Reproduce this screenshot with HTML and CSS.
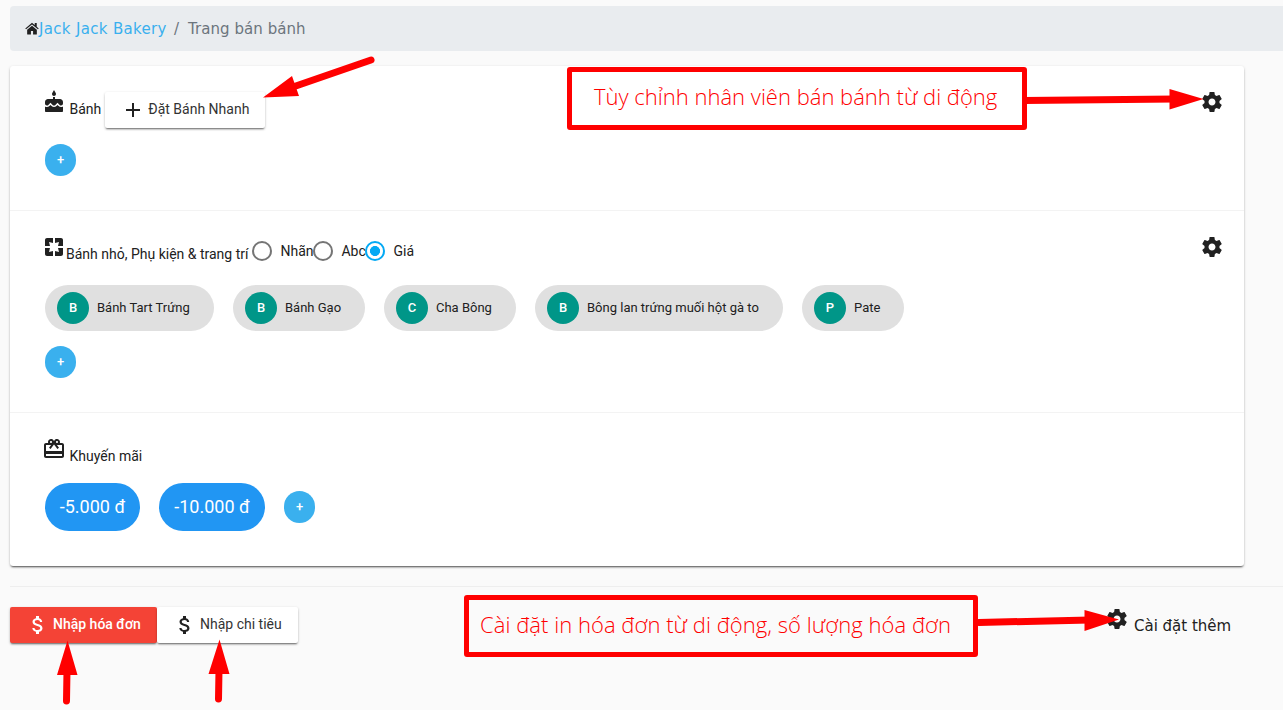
FILE: index.html
```html
<!DOCTYPE html>
<html lang="vi">
<head>
<meta charset="utf-8">
<title>Jack Jack Bakery</title>
<link rel="stylesheet" href="styles.css">
</head>
<body>
<svg class="defs" width="0" height="0">
  <symbol id="gear" viewBox="0 0 24 24"><path d="M19.43 12.98c.04-.32.07-.64.07-.98s-.03-.66-.07-.98l2.11-1.65c.19-.15.24-.42.12-.64l-2-3.46c-.12-.22-.39-.3-.61-.22l-2.49 1c-.52-.4-1.08-.73-1.69-.98l-.38-2.65C14.46 2.18 14.25 2 14 2h-4c-.25 0-.46.18-.49.42l-.38 2.65c-.61.25-1.17.59-1.69.98l-2.49-1c-.23-.09-.49 0-.61.22l-2 3.46c-.13.22-.07.49.12.64l2.11 1.65c-.04.32-.07.65-.07.98s.03.66.07.98l-2.11 1.65c-.19.15-.24.42-.12.64l2 3.46c.12.22.39.3.61.22l2.49-1c.52.4 1.08.73 1.69.98l.38 2.65c.03.24.24.42.49.42h4c.25 0 .46-.18.49-.42l.38-2.65c.61-.25 1.17-.59 1.69-.98l2.49 1c.23.09.49 0 .61-.22l2-3.46c.12-.22.07-.49-.12-.64l-2.11-1.65zM12 15.5c-1.93 0-3.5-1.57-3.5-3.5s1.57-3.5 3.5-3.5 3.5 1.57 3.5 3.5-1.57 3.5-3.5 3.5z"/></symbol>
  <symbol id="dollar" viewBox="0 0 24 24"><path d="M11.8 10.9c-2.27-.59-3-1.2-3-2.15 0-1.09 1.01-1.85 2.7-1.85 1.78 0 2.44.85 2.5 2.1h2.21c-.07-1.72-1.12-3.3-3.21-3.81V3h-3v2.16c-1.94.42-3.5 1.68-3.5 3.61 0 2.31 1.91 3.46 4.7 4.13 2.5.6 3 1.48 3 2.41 0 .69-.49 1.79-2.7 1.79-2.06 0-2.87-.92-2.98-2.1h-2.2c.12 2.19 1.76 3.42 3.68 3.83V21h3v-2.15c1.95-.37 3.5-1.5 3.5-3.55 0-2.84-2.43-3.81-4.7-4.4z"/></symbol>
</svg>

<nav class="breadcrumb">
  <svg class="home" viewBox="0 0 26 24"><path d="M13 7 L4 14.5 V22 q0 1 1 1 h6 v-6.500 h4 V23 h6 q1 0 1-1 v-7.500z"/><path d="M13 1.300 L0.500 11.800 L2 13.600 L13 4.600 L24 13.600 L25.500 11.800 L21.800 8.700 V2 h-3.700 v3.500z"/></svg>
  <a class="crumb-link">Jack Jack Bakery</a><span class="sep">/</span><span class="current">Trang bán bánh</span>
</nav>

<main class="card">
  <section class="panel panel-cakes">
    <div class="head">
      <svg class="icon" viewBox="0 0 24 24"><path d="M12 6c1.11 0 2-.9 2-2 0-.38-.1-.73-.29-1.03L12 0l-1.71 2.97c-.19.3-.29.65-.29 1.03 0 1.1.9 2 2 2zm4.600 9.990l-1.070-1.070-1.080 1.070c-1.300 1.300-3.580 1.310-4.890 0l-1.070-1.070-1.090 1.070C6.750 16.640 5.880 17 4.960 17c-.73 0-1.400-.23-1.960-.61V21c0 .55.45 1 1 1h16c.55 0 1-.45 1-1v-4.610c-.56.38-1.230.61-1.960.61-.92 0-1.790-.36-2.440-1.010zM18 9h-5V7h-2v2H6c-1.660 0-3 1.340-3 3v1.540c0 1.080.88 1.960 1.960 1.960.52 0 1.020-.2 1.380-.57l2.140-2.130 2.130 2.130c.74.74 2.030.74 2.770 0l2.140-2.130 2.130 2.130c.37.37.86.57 1.380.57 1.080 0 1.960-.88 1.960-1.960V12C21 10.340 19.660 9 18 9z"/></svg>
      <span class="title">Bánh</span>
      <button class="btn quick"><svg class="icon" viewBox="0 0 24 24"><path d="M19 13h-6v6h-2v-6H5v-2h6V5h2v6h6v2z"/></svg><span>Đặt Bánh Nhanh</span></button>
      <svg class="icon gear"><use href="#gear"/></svg>
    </div>
    <button class="add">+</button>
  </section>

  <section class="panel panel-items">
    <div class="head">
      <svg class="icon" viewBox="0 0 24 24"><path d="M3 5v6h5L7 7l4 1V3H5c-1.100 0-2 .9-2 2zm5 8H3v6c0 1.100.9 2 2 2h6v-5l-4 1 1-4zm9 4l-4-1v5h6c1.100 0 2-.9 2-2v-6h-5l1 4zm2-14h-6v5l4-1-1 4h5V5c0-1.100-.9-2-2-2z"/></svg>
      <span class="title">Bánh nhỏ, Phụ kiện &amp; trang trí</span>
      <div class="radios">
        <label><i class="radio"></i><span class="r-nhan">Nhãn</span></label>
        <label><i class="radio"></i><span class="r-abc">Abc</span></label>
        <label><i class="radio checked"></i><span>Giá</span></label>
      </div>
      <svg class="icon gear"><use href="#gear"/></svg>
    </div>
    <div class="chips">
      <div class="chip chip-1"><b>B</b><span>Bánh Tart Trứng</span></div>
      <div class="chip chip-2"><b>B</b><span>Bánh Gạo</span></div>
      <div class="chip chip-3"><b>C</b><span>Cha Bông</span></div>
      <div class="chip chip-4"><b>B</b><span>Bông lan trứng muối hột gà to</span></div>
      <div class="chip chip-5"><b>P</b><span>Pate</span></div>
    </div>
    <button class="add">+</button>
  </section>

  <section class="panel panel-promo">
    <div class="head">
      <svg class="icon" viewBox="0 0 24 24"><path d="M20 6h-2.180c.11-.31.18-.65.18-1 0-1.660-1.340-3-3-3-1.050 0-1.960.54-2.500 1.350l-.5.67-.5-.68C10.960 2.540 10.050 2 9 2 7.340 2 6 3.340 6 5c0 .35.07.69.18 1H4c-1.110 0-1.990.89-1.990 2L2 19c0 1.110.89 2 2 2h16c1.110 0 2-.89 2-2V8c0-1.110-.89-2-2-2zm-5-2c.55 0 1 .45 1 1s-.45 1-1 1-1-.45-1-1 .45-1 1-1zM9 4c.55 0 1 .45 1 1s-.45 1-1 1-1-.45-1-1 .45-1 1-1zm11 15H4v-2h16v2zm0-5H4V8h5.080L7 10.830 8.620 12 11 8.760l1-1.360 1 1.360L15.380 12 17 10.830 14.920 8H20v6z"/></svg>
      <span class="title">Khuyến mãi</span>
    </div>
    <div class="promos">
      <button class="promo promo-5">-5.000 đ</button>
      <button class="promo promo-10">-10.000 đ</button>
      <button class="add">+</button>
    </div>
  </section>
</main>

<hr class="rule">

<footer class="actions">
  <button class="btn invoice"><svg class="icon"><use href="#dollar"/></svg><span>Nhập hóa đơn</span></button>
  <button class="btn expense"><svg class="icon"><use href="#dollar"/></svg><span>Nhập chi tiêu</span></button>
  <div class="more"><svg class="icon"><use href="#gear"/></svg><span>Cài đặt thêm</span></div>
</footer>

<svg class="arrows" width="1283" height="710" viewBox="0 0 1283 710">
  <path class="shaft" d="M371 60L290 88M1024 100.500L1175 99M979 622.500L1090 620M66.500 701L67 670M218.500 699L219 670"/>
  <path class="tip" d="M263 97.500L292 76L299 96zM1203.500 99L1169.500 89V109.500zM1119 619.500L1084.500 610V631zM67.500 640.500L57 675H77.500zM219.500 639.500L208.500 674H229.500z"/>
</svg>
<div class="note note-top"><span>Tùy chỉnh nhân viên bán bánh từ di động</span></div>
<div class="note note-bottom"><span>Cài đặt in hóa đơn từ di động, số lượng hóa đơn</span></div>
</body>
</html>
```
FILE: styles.css
```css
* { box-sizing: border-box; }
body {
  margin: 0;
  width: 1283px;
  height: 710px;
  padding: 6px 0 0 10px;
  overflow: hidden;
  position: relative;
  background: #fafafa;
  color: #212121;
  font: 14px/20px Roboto, sans-serif;
}
button { border: 0; padding: 0; font: inherit; color: inherit; }
.defs { position: absolute; }
.icon { width: 24px; height: 24px; flex: none; fill: #212121; }

.breadcrumb {
  display: flex;
  align-items: center;
  height: 45px;
  padding-left: 15px;
  border-radius: 4px 0 0 4px;
  background: #e9ecef;
  color: #6c757d;
  font: 15px/24px "DejaVu Sans", sans-serif;
}
.home { width: 14px; height: 13px; fill: #212121; }
.crumb-link { width: 128px; color: #3ab0ee; letter-spacing: .33px; white-space: nowrap; }
.sep { margin: 0 9px 0 7px; }
.current { letter-spacing: .05px; }

.card {
  width: 1234px;
  height: 500px;
  margin-top: 15px;
  border-radius: 3px;
  background: #fff;
  box-shadow: 0 2px 2px -1px rgba(0,0,0,.6), 0 1px 3px rgba(0,0,0,.2);
}
.panel { padding: 0 20px 0 32px; border-bottom: 1px solid #f3f3f3; }
.panel-cakes { height: 145px; padding-top: 24px; }
.panel-items { height: 202px; padding-top: 24px; }
.panel-promo { height: 153px; padding-top: 24px; border: 0; }
.head { display: flex; align-items: flex-start; height: 54px; }
.title { margin: 9px 3.500px 0 3.500px; white-space: nowrap; }
.gear { margin-left: auto; }
.btn {
  display: flex;
  align-items: center;
  height: 36px;
  border-radius: 2px;
  background: #fff;
  box-shadow: 0 2px 2px -1px rgba(0,0,0,.5), 0 1px 3px rgba(0,0,0,.2);
  white-space: nowrap;
}
.btn span { color: #333; }
.quick { width: 160px; height: 36px; padding: 0 0 0 16px; gap: 3.500px; margin-top: 2px; }
.quick span { padding-bottom: 2px; }
.quick .icon { margin-bottom: 1px; }
.add {
  display: block;
  width: 31px;
  height: 32px;
  margin-left: 3px;
  border-radius: 16px;
  background: #3ab0ee;
  color: #fff;
  font: 500 13px/30px Roboto, sans-serif;
}
.panel-items .title { margin: 9px 4px 0 0; }
.panel-items .head { height: 50px; }
.radios { display: flex; margin-top: 6px; }
.radios label { display: flex; align-items: center; height: 20px; gap: 8px; }
.radio { width: 20px; height: 20px; border: 2px solid #757575; border-radius: 50%; }
.checked { border-color: #03a9f4; background: radial-gradient(circle, #03a9f4 4.700px, transparent 5.300px); }
.r-nhan { width: 33px; }
.r-abc { width: 24px; }
.chips { display: flex; gap: 19px; margin: 0 0 15px 3px; }
.chip {
  display: flex;
  align-items: center;
  gap: 8px;
  height: 46px;
  padding-left: 12px;
  border-radius: 23px;
  background: #e0e0e0;
  font-size: 13px;
  white-space: nowrap;
}
.chip b {
  width: 32px;
  height: 32px;
  border-radius: 50%;
  background: #009688;
  color: #fff;
  font-weight: 500;
  line-height: 32px;
  text-align: center;
}
.chip-1 { width: 169px; }
.chip-2, .chip-3 { width: 132px; }
.chip-4 { width: 248px; }
.chip-5 { width: 102px; }
.panel-promo .head { height: 46px; }
.promos { display: flex; align-items: center; gap: 19px; margin-left: 3px; }
.promos .add { margin: 0; }
.promo { height: 48px; border-radius: 24px; background: #2196f3; color: #fff; font-size: 18px; }
.promo-5 { width: 95px; }
.promo-10 { width: 106px; }

.rule { height: 1px; margin: 20px 0; border: 0; background: #eee; }
.actions { display: flex; align-items: flex-start; }
.actions .btn { padding: 0 0 0 16px; gap: 3px; }
.actions .btn span { padding-bottom: 2px; }
.actions .invoice { width: 147px; background: #f44336; font-weight: 500; }
.actions .invoice span { color: #fff; }
.invoice .icon { fill: #fff; }
.actions .expense { width: 141px; }
.more {
  display: flex;
  margin-left: 807px;
  gap: 5px;
  font: 15px/20px "DejaVu Sans", sans-serif;
  white-space: nowrap;
}
.more span { margin-top: 9px; }

.arrows { position: absolute; left: 0; top: 0; }
.shaft { stroke: #f00; stroke-width: 7; stroke-linecap: round; fill: none; }
.tip { fill: #f00; }
.note {
  position: absolute;
  border: 5px solid #f00;
  border-radius: 3px;
  color: #f00;
  font: 300 22px/30px "Open Sans", sans-serif;
  white-space: nowrap;
}
.note-top { left: 567px; top: 67px; width: 460px; height: 63px; padding: 9px 0 0 22px; background: #fff; }
.note-bottom { left: 464px; top: 595px; width: 514px; height: 62px; padding: 9px 0 0 11px; letter-spacing: .04px; }
```
